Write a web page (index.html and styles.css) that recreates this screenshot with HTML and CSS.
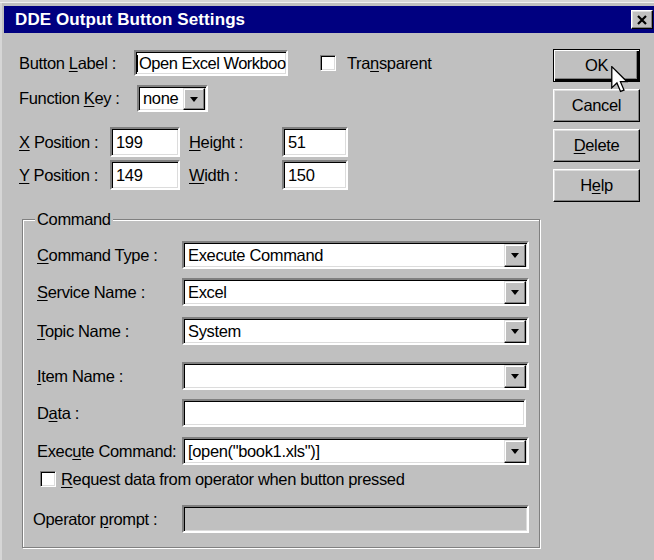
FILE: index.html
```html
<!DOCTYPE html>
<html>
<head>
<meta charset="utf-8">
<title>DDE Output Button Settings</title>
<link rel="stylesheet" href="styles.css">
</head>
<body>
<div class="window">
  <div class="titlebar">
    <span class="title">DDE Output Button Settings</span>
    <button class="close-btn" aria-label="Close">
      <svg width="12" height="10" viewBox="0 0 12 10"><path d="M2 1 L10 9 M10 1 L2 9" stroke="#000" stroke-width="2.2" fill="none"/></svg>
    </button>
  </div>

  <div class="content">
    <div class="form">
      <div class="row r-label">
        <span class="lbl w-btnlabel">Button <u>L</u>abel :</span>
        <div class="field w-name"><span class="caret"></span>Open Excel Workboo</div>
        <span class="check"></span>
        <span class="check-text">Tra<u>n</u>sparent</span>
      </div>

      <div class="row r-fkey">
        <span class="lbl w-fkey">Function <u>K</u>ey :</span>
        <div class="combo w-fcombo"><span class="val">none</span><span class="drop"><i class="arrow"></i></span></div>
      </div>

      <div class="row r-pos">
        <span class="lbl w-pos"><u>X</u> Position :</span>
        <div class="field w-num">199</div>
        <span class="lbl w-size"><u>H</u>eight :</span>
        <div class="field w-num2">51</div>
      </div>

      <div class="row r-pos2">
        <span class="lbl w-pos"><u>Y</u> Position :</span>
        <div class="field w-num">149</div>
        <span class="lbl w-size"><u>W</u>idth :</span>
        <div class="field w-num2">150</div>
      </div>

      <fieldset class="group">
        <legend>Command</legend>

        <div class="grow g-first">
          <span class="glbl"><u>C</u>ommand Type :</span>
          <div class="combo g-ctl"><span class="val">Execute Command</span><span class="drop"><i class="arrow"></i></span></div>
        </div>
        <div class="grow g-gap9">
          <span class="glbl"><u>S</u>ervice Name :</span>
          <div class="combo g-ctl"><span class="val">Excel</span><span class="drop"><i class="arrow"></i></span></div>
        </div>
        <div class="grow g-gap11">
          <span class="glbl"><u>T</u>opic Name :</span>
          <div class="combo g-ctl"><span class="val">System</span><span class="drop"><i class="arrow"></i></span></div>
        </div>
        <div class="grow g-gap17">
          <span class="glbl"><u>I</u>tem Name :</span>
          <div class="combo g-ctl"><span class="val"></span><span class="drop"><i class="arrow"></i></span></div>
        </div>
        <div class="grow g-gap9">
          <span class="glbl">D<u>a</u>ta :</span>
          <div class="field g-data"></div>
        </div>
        <div class="grow g-gap10">
          <span class="glbl">Exec<u>u</u>te Command:</span>
          <div class="combo g-ctl"><span class="val">[open("book1.xls")]</span><span class="drop"><i class="arrow"></i></span></div>
        </div>
        <div class="crow">
          <span class="check"></span>
          <span class="check-text"><u>R</u>equest data from operator when button pressed</span>
        </div>
        <div class="grow g-gap18">
          <span class="glbl g-out">Operator <u>p</u>rompt :</span>
          <div class="field g-ctl disabled"></div>
        </div>
      </fieldset>
    </div>

    <div class="buttons">
      <button class="btn default">OK</button>
      <button class="btn">Cancel</button>
      <button class="btn"><u>D</u>elete</button>
      <button class="btn">H<u>e</u>lp</button>
    </div>
  </div>

  <svg class="pointer" width="17" height="27" viewBox="0 0 13 21">
    <path d="M0.5 0.5 L0.5 17 L4.5 13.2 L7.3 19.8 L10 18.7 L7.2 12.2 L12.3 12.2 Z" fill="#fff" stroke="#000" stroke-width="1" stroke-linejoin="miter"/>
  </svg>
</div>
</body>
</html>
```

FILE: styles.css
```css
* {
  box-sizing: border-box;
}

body {
  margin: 0;
  background: #c0c0c0;
  font-family: "Liberation Sans", Arial, sans-serif;
  font-size: 16.5px;
  letter-spacing: -0.35px;
  color: #000;
}

u {
  text-underline-offset: 2px;
}

/* dialog frame */
.window {
  position: relative;
  width: 654px;
  height: 560px;
  padding: 6px 0 0 4px;
  background: #c0c0c0;
  overflow: hidden;
  box-shadow: inset 0 2px 0 #d6d6d6, inset 0 3px 0 #efefef, inset 2px 0 0 #d6d6d6;
}

.titlebar {
  display: flex;
  align-items: center;
  height: 27px;
  padding: 0 1px 0 11px;
  background: #000080;
}

.title {
  color: #fff;
  font-weight: bold;
  font-size: 17px;
  letter-spacing: 0.1px;
}

.close-btn {
  margin-left: auto;
  width: 22px;
  height: 19px;
  padding: 0;
  display: flex;
  align-items: center;
  justify-content: center;
  background: #c0c0c0;
  border: 1px solid;
  border-color: #fff #000 #000 #fff;
  box-shadow: inset -1px -1px 0 #808080, inset 1px 1px 0 #dfdfdf;
}

/* body of the dialog */
.content {
  display: flex;
}

.form {
  width: 537px;
  padding: 17px 0 0 15px;
}

.row {
  display: flex;
  align-items: center;
}

.r-label { height: 26px; }
.r-fkey { height: 27px; margin-top: 9px; }
.r-pos { height: 30px; margin-top: 15px; }
.r-pos2 { height: 30px; margin-top: 3px; }

.lbl {
  flex: none;
  white-space: nowrap;
}

.w-btnlabel { width: 115px; }
.w-fkey { width: 118px; }
.w-pos { width: 91px; }
.w-size { width: 93px; margin-left: 9px; }

/* sunken edit box */
.field {
  display: flex;
  align-items: center;
  height: 100%;
  padding: 0 4px;
  background: #fff;
  border: 2px solid;
  border-color: #808080 #fff #fff #808080;
  box-shadow: inset 1px 1px 0 #000, inset -1px -1px 0 #dcdcdc;
  white-space: nowrap;
  overflow: hidden;
}

.field.disabled {
  background: #c0c0c0;
}

.caret {
  flex: none;
  width: 1px;
  height: 17px;
  margin-right: 1px;
  background: #000;
}

.w-name { width: 154px; padding-left: 1px; letter-spacing: -0.5px; }
.w-num { width: 70px; }
.w-num2 { width: 66px; }

/* drop-down list */
.combo {
  display: flex;
  align-items: stretch;
  height: 100%;
  padding: 0 1px 0 4px;
  background: #fff;
  border: 2px solid;
  border-color: #808080 #fff #fff #808080;
  box-shadow: inset 1px 1px 0 #000, inset -1px -1px 0 #dcdcdc;
}

.combo .val {
  flex: 1;
  display: flex;
  align-items: center;
  white-space: nowrap;
  overflow: hidden;
}

.drop {
  flex: none;
  width: 22px;
  margin: 1px 0 0;
  display: flex;
  align-items: center;
  justify-content: center;
  background: #c0c0c0;
  border: 1px solid;
  border-color: #dfdfdf #000 #000 #dfdfdf;
  box-shadow: inset -1px -1px 0 #808080, inset 1px 1px 0 #fff;
}

.arrow {
  width: 0;
  height: 0;
  border-top: 5px solid #000;
  border-left: 4px solid transparent;
  border-right: 4px solid transparent;
}

.w-fcombo { width: 71px; }

/* check box */
.check {
  flex: none;
  width: 16px;
  height: 16px;
  background: #fff;
  border: 1px solid;
  border-color: #808080 #fff #fff #808080;
  box-shadow: inset 1px 1px 0 #000, inset -1px -1px 0 #dcdcdc;
}

.r-label .check { margin-left: 32px; }
.check-text { margin-left: 11px; white-space: nowrap; }

/* Command group */
.group {
  margin: 20px 0 0 3px;
  width: 518px;
  min-width: 0;
  padding: 13px 10px 14px 14px;
  border: 1px solid #808080;
  box-shadow: inset 1px 1px 0 #fff, 1px 1px 0 #fff;
}

.group legend {
  margin-left: -2px;
  padding: 0 2px;
  line-height: 18px;
  background: #c0c0c0;
}

.grow {
  display: flex;
  align-items: center;
  height: 28px;
}

.glbl {
  flex: none;
  width: 145px;
  white-space: nowrap;
}

.glbl.g-out {
  width: 149px;
  margin-left: -4px;
}

.g-ctl { width: 347px; }
.g-data { width: 344px; }

.g-gap9 { margin-top: 9px; }
.g-gap10 { margin-top: 10px; }
.g-gap11 { margin-top: 11px; }
.g-gap17 { margin-top: 17px; }
.g-gap18 { margin-top: 18px; }

.crow {
  display: flex;
  align-items: center;
  height: 16px;
  margin-top: 6px;
}

.crow .check { margin-left: 3px; }
.crow .check-text { margin-left: 5px; }

/* push buttons */
.buttons {
  display: flex;
  flex-direction: column;
  gap: 7px;
  width: 87px;
  margin-left: 12px;
  padding-top: 16px;
}

.btn {
  height: 33px;
  padding: 0;
  font: inherit;
  letter-spacing: inherit;
  color: #000;
  background: #c0c0c0;
  border: 1px solid;
  border-color: #fff #000 #000 #fff;
  box-shadow: inset -1px -1px 0 #808080, inset 1px 1px 0 #dfdfdf;
}

.btn.default {
  border: 1px solid #000;
  box-shadow: inset 1px 1px 0 #fff, inset -1px -1px 0 #000, inset -2px -2px 0 #000, inset -3px -3px 0 #808080;
}

/* mouse pointer resting on OK */
.pointer {
  position: absolute;
  left: 611px;
  top: 66px;
}
```
